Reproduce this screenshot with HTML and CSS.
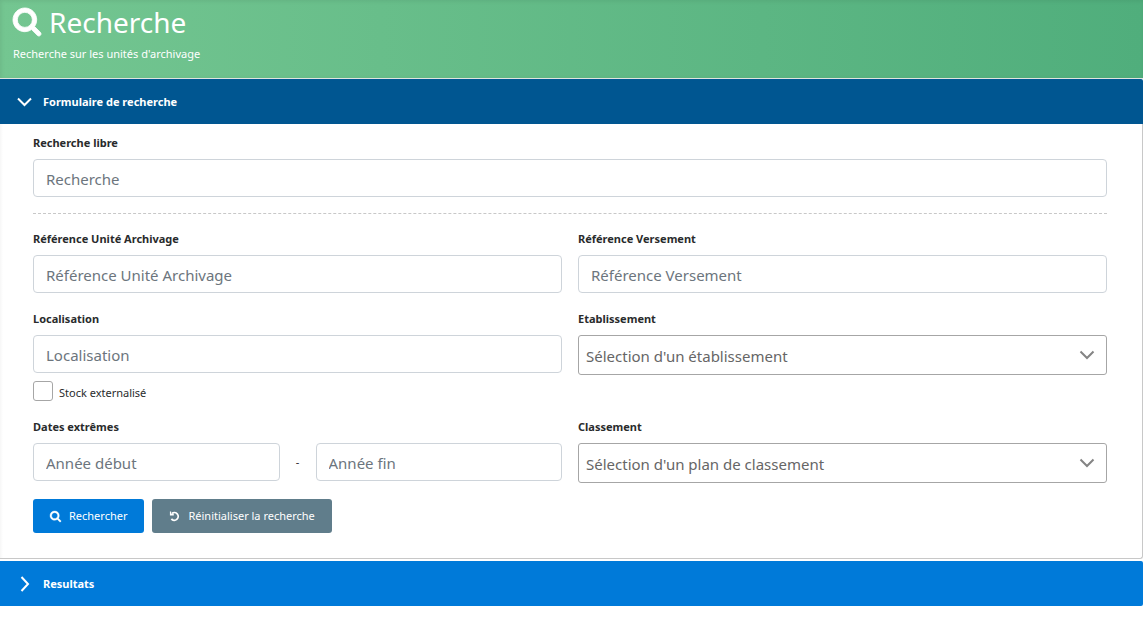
FILE: index.html
```html
<!DOCTYPE html>
<html lang="fr">
<head>
<meta charset="utf-8">
<title>Recherche</title>
<link rel="stylesheet" href="styles.css">
</head>
<body>
<header class="banner">
  <h1 class="banner-title">
    <svg class="search-icon banner-icon" viewBox="0 0 1664 1664" aria-hidden="true"><path d="M1152 704q0-185-131.500-316.500T704 256 387.500 387.500 256 704t131.500 316.500T704 1152t316.500-131.500T1152 704zm512 832q0 52-38 90t-90 38q-54 0-90-38l-343-342q-179 124-399 124-143 0-273.500-55.500t-225-150-150-225T0 704t55.500-273.500 150-225 225-150T704 0t273.500 55.500 225 150 150 225T1408 704q0 220-124 399l343 343q37 37 37 90z"/></svg>
    <span>Recherche</span>
  </h1>
  <p class="banner-text">Recherche sur les unités d'archivage</p>
</header>
<main class="accordion">
  <section class="panel">
    <h2 class="panel-heading">
      <button type="button" class="panel-toggle panel-toggle-open" aria-expanded="true" aria-controls="search-form">
        <svg class="chevron" viewBox="0 0 16 16" aria-hidden="true"><path d="M1 4.500l6.500 6.500 6.500-6.500"/></svg>
        <span>Formulaire de recherche</span>
      </button>
    </h2>
    <form class="panel-body" id="search-form">
      <div class="field">
        <label class="label" for="free">Recherche libre</label>
        <input class="input" id="free" type="text" placeholder="Recherche">
      </div>
      <hr class="divider">
      <div class="fields">
        <div class="field">
          <label class="label" for="ref-unit">Référence Unité Archivage</label>
          <input class="input" id="ref-unit" type="text" placeholder="Référence Unité Archivage">
        </div>
        <div class="field">
          <label class="label" for="ref-transfer">Référence Versement</label>
          <input class="input" id="ref-transfer" type="text" placeholder="Référence Versement">
        </div>
        <div class="field">
          <label class="label" for="location">Localisation</label>
          <input class="input" id="location" type="text" placeholder="Localisation">
          <div class="check">
            <input class="check-box" id="external" type="checkbox">
            <label for="external">Stock externalisé</label>
          </div>
        </div>
        <div class="field">
          <label class="label" for="site">Etablissement</label>
          <div class="select-wrap">
            <select class="select" id="site"><option>Sélection d'un établissement</option></select>
            <svg class="chevron select-arrow" viewBox="0 0 16 16" aria-hidden="true"><path d="M1.500 4.500l6.500 6.500 6.500-6.500"/></svg>
          </div>
        </div>
        <div class="field">
          <label class="label" for="year-start">Dates extrêmes</label>
          <div class="range">
            <input class="input" id="year-start" type="text" placeholder="Année début">
            <span class="range-dash">-</span>
            <input class="input" type="text" placeholder="Année fin" aria-label="Année fin">
          </div>
        </div>
        <div class="field">
          <label class="label" for="plan">Classement</label>
          <div class="select-wrap">
            <select class="select" id="plan"><option>Sélection d'un plan de classement</option></select>
            <svg class="chevron select-arrow" viewBox="0 0 16 16" aria-hidden="true"><path d="M1.500 4.500l6.500 6.500 6.500-6.500"/></svg>
          </div>
        </div>
      </div>
      <div class="actions">
        <button type="submit" class="button button-primary">
          <svg class="search-icon button-icon" viewBox="0 0 1664 1664" aria-hidden="true"><path d="M1152 704q0-185-131.500-316.500T704 256 387.500 387.500 256 704t131.500 316.500T704 1152t316.500-131.500T1152 704zm512 832q0 52-38 90t-90 38q-54 0-90-38l-343-342q-179 124-399 124-143 0-273.500-55.500t-225-150-150-225T0 704t55.500-273.500 150-225 225-150T704 0t273.500 55.500 225 150 150 225T1408 704q0 220-124 399l343 343q37 37 37 90z"/></svg>
          <span>Rechercher</span>
        </button>
        <button type="reset" class="button button-secondary">
          <svg class="button-icon" viewBox="0 0 12 12" aria-hidden="true"><path fill="none" stroke="currentColor" stroke-width="2" d="M3.200 2.600A4.200 4.200 0 1 1 2.600 8.600"/><path fill="currentColor" d="M1 .5h1.300v2.300h2.900v2H1z"/></svg>
          <span>Réinitialiser la recherche</span>
        </button>
      </div>
    </form>
  </section>
  <section class="panel">
    <h2 class="panel-heading">
      <button type="button" class="panel-toggle" aria-expanded="false">
        <svg class="chevron" viewBox="0 0 16 16" aria-hidden="true"><path d="M4.500 1l6.500 7-6.500 7"/></svg>
        <span>Resultats</span>
      </button>
    </h2>
  </section>
</main>
</body>
</html>
```

FILE: styles.css
```css
* {
  box-sizing: border-box;
}

body {
  margin: 0;
  background: #fff;
  color: #292b2c;
  font: 11px/18px "Noto Sans", "Open Sans", sans-serif;
}

.banner {
  height: 79px;
  padding: 4px 13px;
  border-bottom: 1px solid #dfe3df;
  background: linear-gradient(90deg, #74c691, #50ae7c);
  box-shadow: inset 1px 1px 4px rgba(0, 0, 0, 0.08);
  color: #fff;
}

.banner-title {
  display: flex;
  align-items: center;
  gap: 8px;
  margin: 0 0 4px;
  font-size: 28px;
  font-weight: 400;
  line-height: 36px;
}

.search-icon {
  overflow: visible;
  fill: currentColor;
  stroke: currentColor;
  stroke-width: 50;
}

.banner-icon {
  width: 28px;
  height: 28px;
}

.banner-text {
  margin: 0;
  line-height: 20px;
}

.accordion {
  display: grid;
  gap: 2px;
}

.panel-heading {
  margin: 0;
}

.panel-toggle {
  display: flex;
  align-items: center;
  gap: 10px;
  width: 100%;
  height: 45px;
  padding: 0 17px;
  border: 0;
  border-radius: 0 2px 2px 0;
  background: #007ad9;
  color: #fff;
  font: bold 11px/16px "Noto Sans", "Open Sans", sans-serif;
}

.panel-toggle-open {
  border-radius: 0 2px 0 0;
  background: #005691;
}

.chevron {
  width: 16px;
  height: 16px;
  fill: none;
  stroke: currentColor;
  stroke-width: 2;
}

.panel-body {
  padding: 9px 35px 25px 33px;
  border: solid #c8c8c8;
  border-width: 0 1px 1px 0;
  border-radius: 0 0 3px 0;
  background: linear-gradient(90deg, #f7f7f7, #fff 3px);
}

.label {
  display: block;
  margin-bottom: 6px;
  font-weight: bold;
  line-height: 20px;
}

.input,
.select {
  display: block;
  width: 100%;
  min-width: 0;
  font: 15px/24px "Noto Sans", "Open Sans", sans-serif;
}

.input {
  height: 38px;
  padding: 7px 12px 5px;
  border: 1px solid #ced4da;
  border-radius: 4px;
  background: #fff;
  color: #495057;
}

.input::placeholder {
  color: #6c757d;
  opacity: 1;
}

.select-wrap {
  position: relative;
}

.select {
  height: 40px;
  padding: 2px 36px 0 7px;
  border: 1px solid #a6a6a6;
  border-radius: 3px;
  appearance: none;
  background: #fff;
  color: #666;
}

.select-arrow {
  position: absolute;
  top: 12px;
  right: 12px;
  color: #848484;
  pointer-events: none;
}

.divider {
  margin: 16px 0 15px;
  border: 0;
  border-top: 1px dashed #c8c8c8;
}

.fields {
  display: grid;
  grid-template-columns: 1fr 1fr;
  gap: 16px;
}

.check {
  display: flex;
  gap: 6px;
  margin-top: 8px;
  height: 20px;
  line-height: 24px;
}

.check-box {
  width: 20px;
  height: 20px;
  margin: 0;
  border: 1px solid #a6a6a6;
  border-radius: 3px;
  appearance: none;
  background: #fff;
}

.check-box:checked {
  background: #007ad9;
}

.range {
  display: grid;
  grid-template-columns: 1fr 36px 1fr;
  align-items: center;
}

.range-dash {
  text-align: center;
}

.actions {
  display: flex;
  gap: 8px;
  margin-top: 16px;
}

.button {
  display: flex;
  align-items: center;
  gap: 8px;
  height: 34px;
  padding: 0 17px;
  border: 0;
  border-radius: 3px;
  color: #fff;
  font: 11px/16px "Noto Sans", "Open Sans", sans-serif;
}

.button-primary {
  background: #007ad9;
}

.button-secondary {
  background: #607d8b;
}

.button-icon {
  width: 11px;
  height: 11px;
}
```
